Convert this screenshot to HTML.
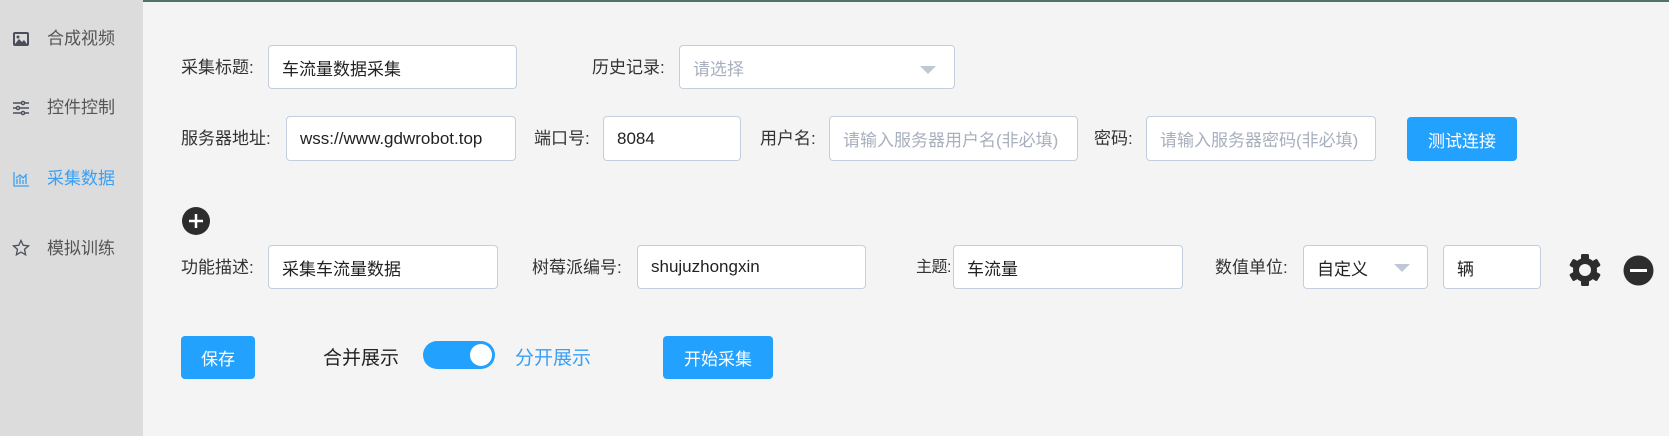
<!DOCTYPE html>
<html><head><meta charset="utf-8"><style>
*{box-sizing:border-box;margin:0;padding:0}
body{width:1669px;height:436px;overflow:hidden;background:#f4f4f4;font-family:"Liberation Sans","Noto Sans CJK SC",sans-serif;font-size:17px;color:#333;position:relative}
.side{position:absolute;left:0;top:0;width:143px;height:436px;background:#dcdcdc}
.top{position:absolute;left:143px;top:0;right:0;height:2px;background:#4d7565}
.it{position:absolute;left:47px;font-size:17px;color:#555;height:24px;display:flex;align-items:center}
.ic{position:absolute;left:12px;width:18px;height:18px}
.a{position:absolute;white-space:nowrap;display:flex;align-items:center;height:44px;margin-top:-2px}
.lb{color:#333}
.in{position:absolute;background:#fff;border:1px solid #c4cedd;border-radius:4px;padding-left:13px;display:flex;align-items:center;color:#222;white-space:nowrap}
.ph{color:#a8afbd}
.btn{position:absolute;background:#22a1ff;color:#fff;border-radius:4px;display:flex;align-items:center;justify-content:center}
.tri{position:absolute;width:0;height:0;border-left:8px solid transparent;border-right:8px solid transparent;border-top:8px solid #c0c8d6}
</style></head><body>
<div class="side"></div><div class="top"></div>
<svg class="ic" style="top:30px" viewBox="0 0 18 18"><rect x="1" y="2" width="16" height="14" rx="2" fill="#4a4f5a"/><rect x="3" y="4" width="12" height="10" fill="#dcdcdc"/><path d="M3 14 L7 9 L10 12 L12 10 L15 14Z" fill="#4a4f5a"/><circle cx="6" cy="7" r="1.5" fill="#4a4f5a"/></svg>
<div class="it" style="top:24px">合成视频</div>
<svg class="ic" style="top:99px" viewBox="0 0 18 18" fill="none" stroke="#4a4f5a" stroke-width="1.4"><path d="M1 4H17M1 9H17M1 14H17"/><circle cx="11" cy="4" r="1.6" fill="#dcdcdc"/><circle cx="6" cy="9" r="1.6" fill="#dcdcdc"/><circle cx="11" cy="14" r="1.6" fill="#dcdcdc"/></svg>
<div class="it" style="top:93px">控件控制</div>
<svg class="ic" style="top:170px" viewBox="0 0 18 18" fill="none" stroke="#3a9ff5" stroke-width="1.3"><path d="M2 2V16H17"/><path d="M5 14V9M8 14V7M11 14V10M14 14V6"/><path d="M4 8L8 5L11 8L15 4"/></svg>
<div class="it" style="top:164px;color:#3a9ff5">采集数据</div>
<svg class="ic" style="top:239px" viewBox="0 0 18 18" fill="none" stroke="#4a4f5a" stroke-width="1.3"><path d="M9 1.5L11.2 6.3L16.5 6.9L12.5 10.4L13.6 15.8L9 13.1L4.4 15.8L5.5 10.4L1.5 6.9L6.8 6.3Z"/></svg>
<div class="it" style="top:234px">模拟训练</div>

<div class="a lb" style="left:181px;top:45px">采集标题:</div>
<div class="in" style="left:268px;top:45px;width:249px;height:44px">车流量数据采集</div>
<div class="a lb" style="left:592px;top:45px">历史记录:</div>
<div class="in ph" style="left:679px;top:45px;width:276px;height:44px">请选择</div>
<div class="tri" style="left:920px;top:66px"></div>

<div class="a lb" style="left:181px;top:116px;height:45px">服务器地址:</div>
<div class="in" style="left:286px;top:116px;width:230px;height:45px">wss://www.gdwrobot.top</div>
<div class="a lb" style="left:534px;top:116px;height:45px">端口号:</div>
<div class="in" style="left:603px;top:116px;width:138px;height:45px">8084</div>
<div class="a lb" style="left:760px;top:116px;height:45px">用户名:</div>
<div class="in ph" style="left:829px;top:116px;width:249px;height:45px">请输入服务器用户名(非必填)</div>
<div class="a lb" style="left:1094px;top:116px;height:45px">密码:</div>
<div class="in ph" style="left:1146px;top:116px;width:230px;height:45px">请输入服务器密码(非必填)</div>
<div class="btn" style="left:1407px;top:117px;width:110px;height:44px">测试连接</div>

<svg style="position:absolute;left:182px;top:207px" width="28" height="28" viewBox="0 0 28 28"><circle cx="14" cy="14" r="14" fill="#2d2d2d"/><path d="M14 7V21M7 14H21" stroke="#fff" stroke-width="2.5"/></svg>

<div class="a lb" style="left:181px;top:245px">功能描述:</div>
<div class="in" style="left:268px;top:245px;width:230px;height:44px">采集车流量数据</div>
<div class="a lb" style="left:532px;top:245px">树莓派编号:</div>
<div class="in" style="left:637px;top:245px;width:229px;height:44px">shujuzhongxin</div>
<div class="a lb" style="left:916px;top:245px;font-size:16px;letter-spacing:-0.5px">主题:</div>
<div class="in" style="left:953px;top:245px;width:230px;height:44px">车流量</div>
<div class="a lb" style="left:1215px;top:245px">数值单位:</div>
<div class="in" style="left:1303px;top:245px;width:125px;height:44px">自定义</div>
<div class="tri" style="left:1394px;top:264px"></div>
<div class="in" style="left:1443px;top:245px;width:98px;height:44px">辆</div>
<svg style="position:absolute;left:1568px;top:253px" width="34" height="34" viewBox="0 0 34 34"><defs><g id="t"><rect x="13" y="1" width="8" height="8" rx="1.5"/><rect x="13" y="25" width="8" height="8" rx="1.5"/></g></defs><g fill="#2d2d2d"><circle cx="17" cy="17" r="12"/><use href="#t"/><use href="#t" transform="rotate(60 17 17)"/><use href="#t" transform="rotate(120 17 17)"/></g><circle cx="17" cy="17" r="6" fill="#f4f4f4"/></svg>
<svg style="position:absolute;left:1623px;top:255px" width="31" height="31" viewBox="0 0 31 31"><circle cx="15.5" cy="15.5" r="15" fill="#2d2d2d"/><rect x="7" y="14" width="17" height="3" fill="#fff"/></svg>

<div class="btn" style="left:181px;top:336px;width:74px;height:43px">保存</div>
<div class="a" style="left:323px;top:336px;color:#222;font-size:19px">合并展示</div>
<div style="position:absolute;left:423px;top:341px;width:72px;height:28px;border-radius:14px;background:#22a1ff"><div style="position:absolute;right:3px;top:3px;width:22px;height:22px;border-radius:50%;background:#fff"></div></div>
<div class="a" style="left:515px;top:336px;color:#3a9ff5;font-size:19px">分开展示</div>
<div class="btn" style="left:663px;top:336px;width:110px;height:43px">开始采集</div>
</body></html>
